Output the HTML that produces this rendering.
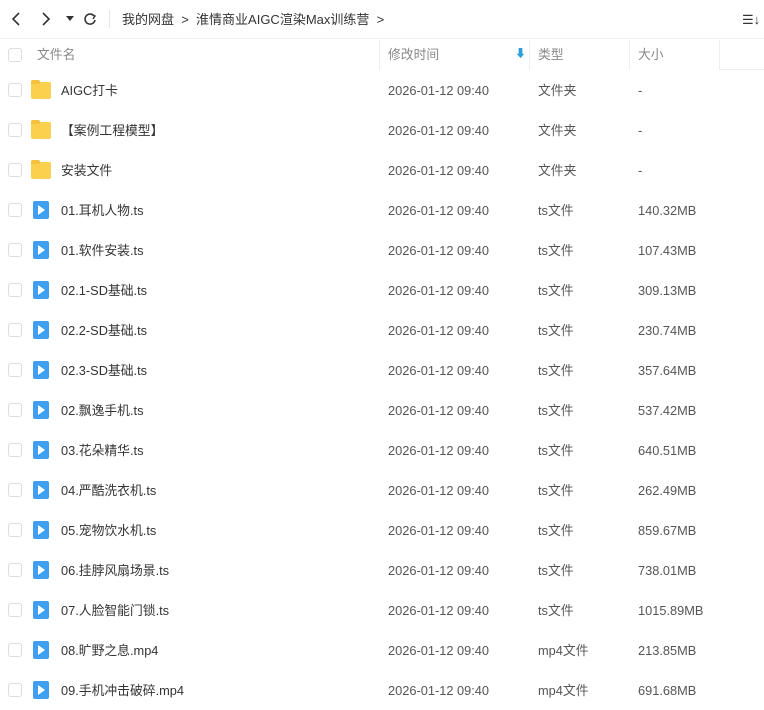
<!DOCTYPE html>
<html><head><meta charset="utf-8"><style>
body{margin:0;width:764px;height:710px;background:#fff;font-family:"Liberation Sans","Noto Sans CJK SC",sans-serif;color:#333;position:relative;overflow:hidden;font-size:12.8px;line-height:16px}
.a{position:absolute;white-space:nowrap;line-height:16px}
.cb{position:absolute;left:8px;width:12px;height:12px;border:1px solid #ddd;border-radius:3px;background:#fff}
.hd{color:#888}
.fold{position:absolute;left:31px;width:20px;height:17px;background:#fcd04f;border-radius:2px}
.fold:before{content:"";position:absolute;left:0;top:-2px;width:9px;height:4px;background:#f5c040;border-radius:2px 2px 0 0}
.vid{position:absolute;left:33px;width:16px;height:18px;background:#3f9ff0;border-radius:2px}
.vid:after{content:"";position:absolute;left:5px;top:4px;border-left:7px solid #fff;border-top:5px solid transparent;border-bottom:5px solid transparent}
</style></head><body>
<svg class="a" style="left:10px;top:11px" width="12" height="16"><path d="M9 2 L3 8 L9 14" stroke="#333" stroke-width="1.6" fill="none"/></svg>
<svg class="a" style="left:40px;top:11px" width="12" height="16"><path d="M3 2 L9 8 L3 14" stroke="#333" stroke-width="1.6" fill="none"/></svg>
<svg class="a" style="left:66px;top:16px" width="8" height="6"><path d="M0 0 L8 0 L4 5Z" fill="#333"/></svg>
<svg class="a" style="left:83px;top:12px" width="14" height="14"><path d="M11 4 A5 5 0 1 0 12 8" stroke="#333" stroke-width="1.6" fill="none"/><path d="M8 2 L12 4 L10 7" stroke="#333" stroke-width="1.4" fill="none"/></svg>
<div class="a" style="left:109px;top:10px;width:1px;height:18px;background:#e5e5e5"></div>
<div class="a" style="left:122px;top:12px;font-size:13px">我的网盘&nbsp;&nbsp;&gt;&nbsp;&nbsp;淮情商业AIGC渲染Max训练营&nbsp;&nbsp;&gt;</div>
<div class="a" style="left:742px;top:12px;font-size:13px">☰↓</div>
<div class="a" style="left:0;top:38px;width:764px;height:1px;background:#f0f0f0"></div>
<div class="a" style="left:379px;top:40px;width:1px;height:30px;background:#eee"></div>
<div class="a" style="left:529px;top:40px;width:1px;height:30px;background:#eee"></div>
<div class="a" style="left:629px;top:40px;width:1px;height:30px;background:#eee"></div>
<div class="a" style="left:719px;top:40px;width:1px;height:29px;background:#eee"></div>
<div class="a" style="left:719px;top:69px;width:45px;height:1px;background:#eee"></div>
<div class="cb" style="top:48px"></div>
<div class="a hd" style="left:37px;top:47px">文件名</div>
<div class="a hd" style="left:388px;top:47px">修改时间</div>
<div class="a" style="left:515px;top:46px;color:#2a9fd8;font-size:11px">⬇</div>
<div class="a hd" style="left:538px;top:47px">类型</div>
<div class="a hd" style="left:638px;top:47px">大小</div>
<div id="rows"></div>
<script>
var r=[["f","AIGC打卡","文件夹","-"],["f","【案例工程模型】","文件夹","-"],["f","安装文件","文件夹","-"],
["v","01.耳机人物.ts","ts文件","140.32MB"],["v","01.软件安装.ts","ts文件","107.43MB"],["v","02.1-SD基础.ts","ts文件","309.13MB"],
["v","02.2-SD基础.ts","ts文件","230.74MB"],["v","02.3-SD基础.ts","ts文件","357.64MB"],["v","02.飘逸手机.ts","ts文件","537.42MB"],
["v","03.花朵精华.ts","ts文件","640.51MB"],["v","04.严酷洗衣机.ts","ts文件","262.49MB"],["v","05.宠物饮水机.ts","ts文件","859.67MB"],
["v","06.挂脖风扇场景.ts","ts文件","738.01MB"],["v","07.人脸智能门锁.ts","ts文件","1015.89MB"],["v","08.旷野之息.mp4","mp4文件","213.85MB"],
["v","09.手机冲击破碎.mp4","mp4文件","691.68MB"]];
var h="";r.forEach(function(x,i){var c=90+i*40;var t=c-7;
h+='<div class="cb" style="top:'+(c-7)+'px"></div>';
h+=x[0]=="f"?'<div class="fold" style="top:'+(c-8)+'px"></div>':'<div class="vid" style="top:'+(c-9)+'px"></div>';
h+='<div class="a" style="left:61px;top:'+t+'px">'+x[1]+'</div>';
h+='<div class="a" style="left:388px;top:'+t+'px;color:#555">2026-01-12 09:40</div>';
h+='<div class="a" style="left:538px;top:'+t+'px;color:#555">'+x[2]+'</div>';
h+='<div class="a" style="left:638px;top:'+t+'px;color:#555">'+x[3]+'</div>';});
document.getElementById("rows").innerHTML=h;
</script>
</body></html>
